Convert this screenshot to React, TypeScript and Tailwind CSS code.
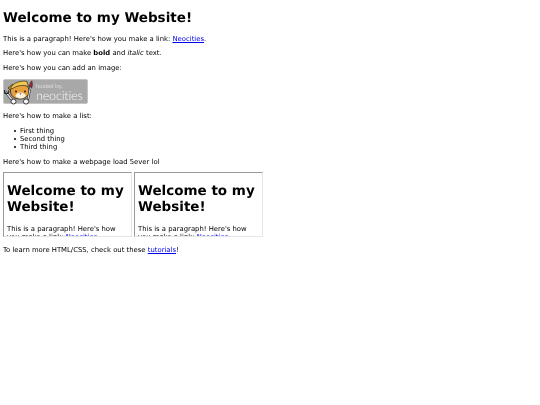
function Badge() {
  return (
    <div className="relative w-[85px] h-[25px] rounded-[2px] bg-[#a8a8a8] border-[0.5px] border-[#c4c4c4] flex flex-col items-start pl-[32px] text-[#f7f7f7] leading-none font-['Lato',sans-serif]">
      <span className="text-[6px] mt-[3.5px] leading-[6px] font-light">hosted by,</span>
      <span className="text-[12.5px] mt-[-0.5px] leading-[13px] font-light tracking-[-0.15px]">neocities</span>
      <svg className="absolute left-[-0.5px] top-[-0.5px]" width="34" height="25" viewBox="0 0 34 25">
        {/* wrench */}
        <path d="M2.5 13 L9 21" stroke="#2a2a2a" strokeWidth="2.6" strokeLinecap="round" />
        <path d="M2.5 13 L9 21" stroke="#e2e2e2" strokeWidth="1.3" strokeLinecap="round" />
        <path d="M0.5 10 L0.8 13.5 L4 13.5 L5 10.5" fill="none" stroke="#2a2a2a" strokeWidth="1.2" />
        {/* ear */}
        <path d="M4 8 L9 4 L12 8 L8 12 Z" fill="#e39a35" stroke="#2a2a2a" strokeWidth="0.8" />
        {/* head */}
        <path d="M6.5 11 C6.5 6 11 4 16 4 C21 4 25 6 25 11 C25 16 21 19 16 19 C10.5 19 6.5 16 6.5 11 Z" fill="#e8a03a" stroke="#2a2a2a" strokeWidth="0.9" />
        {/* helmet */}
        <path d="M7 7.5 C9 3 17 0 23 1.5 L24.5 6.5 C19 4.5 12 5.5 8 9 Z" fill="#f2c64c" stroke="#2a2a2a" strokeWidth="0.7" />
        {/* muzzle and face */}
        <ellipse cx="16.5" cy="15.5" rx="5" ry="3" fill="#fbf3e2" />
        <circle cx="12" cy="11.5" r="1" fill="#222" />
        <circle cx="21" cy="11.5" r="1" fill="#222" />
        <path d="M15.5 13.5 L17.5 13.5 L16.5 14.8 Z" fill="#4a2515" />
        {/* hands */}
        <circle cx="9.5" cy="21.5" r="2.5" fill="#f7f7f7" stroke="#2a2a2a" strokeWidth="0.9" />
        {/* paintbrush */}
        <path d="M24 19 L26.5 7" stroke="#2a2a2a" strokeWidth="2" strokeLinecap="round" />
        <path d="M24 19 L26.5 7" stroke="#ddd" strokeWidth="1" strokeLinecap="round" />
        <path d="M25.5 7 C25.3 4 26.5 2 27.8 0.8 C28.6 3 28.6 5 28 7.5 Z" fill="#8f2f3b" stroke="#3a1a1f" strokeWidth="0.5" />
        <circle cx="22" cy="21.5" r="2.6" fill="#f7f7f7" stroke="#2a2a2a" strokeWidth="0.9" />
      </svg>
    </div>
  );
}

function Frame() {
  return (
    <div className="w-[129px] h-[65px] overflow-hidden border border-t-[#9a9a9a] border-l-[#9a9a9a] border-r-[#e6e6e6] border-b-[#e6e6e6] px-[3px]">
      <h1 className="text-[13.5px] font-bold mt-[10px] mb-[10px] leading-[16px]">Welcome to my Website!</h1>
      <p className="leading-[8px]">
        This is a paragraph! Here's how you make a link: <a className="text-[#0000ee] underline">Neocities</a>.
      </p>
    </div>
  );
}

function Item({ children }: { children: string }) {
  return (
    <li className="flex items-center gap-[4px]">
      <span className="w-[2px] h-[2px] rounded-full bg-black" />
      {children}
    </li>
  );
}

export default function App() {
  return (
    <div className="min-h-[405px] bg-white text-black text-[6.85px] leading-[8px] px-[3px] blur-[0.3px] [text-rendering:geometricPrecision] font-['DejaVu_Sans',sans-serif]">
      <h1 className="text-[13.5px] font-bold leading-[16px] pt-[10px] mb-[9px]">Welcome to my Website!</h1>
      <p className="mb-[6px]">
        This is a paragraph! Here's how you make a link: <a className="text-[#0000ee] underline">Neocities</a>.
      </p>
      <p className="mb-[7px]">
        Here's how you can make <b>bold</b> and <i>italic</i> text.
      </p>
      <p className="mb-[7px]">Here's how you can add an image:</p>
      <Badge />
      <p className="mt-[8px] mb-[7px]">Here's how to make a list:</p>
      <ul className="pl-[11px] mb-[7px]">
        <Item>First thing</Item>
        <Item>Second thing</Item>
        <Item>Third thing</Item>
      </ul>
      <p className="mb-[6px]">Here's how to make a webpage load 5ever lol</p>
      <div className="flex gap-[2px]">
        <Frame />
        <Frame />
      </div>
      <p className="mt-[9px]">
        To learn more HTML/CSS, check out these <a className="text-[#0000ee] underline">tutorials</a>!
      </p>
    </div>
  );
}
